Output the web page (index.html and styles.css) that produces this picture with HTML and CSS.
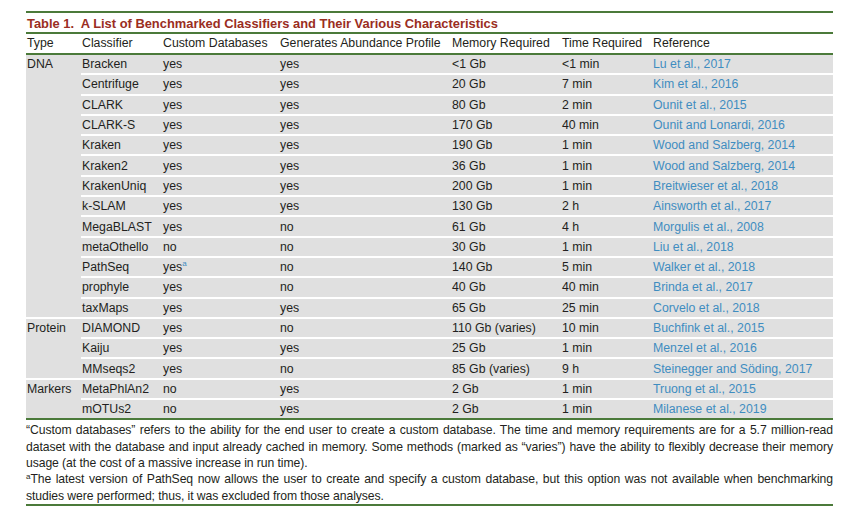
FILE: index.html
```html
<!DOCTYPE html>
<html>
<head>
<meta charset="utf-8">
<link rel="stylesheet" href="styles.css">
</head>
<body>
<div class="wrap">
  <div class="title">Table 1.&nbsp; A List of Benchmarked Classifiers and Their Various Characteristics</div>
  <table class="tbl">
    <colgroup>
      <col class="c1"><col class="c2"><col class="c3"><col class="c4"><col class="c5"><col class="c6"><col class="c7">
    </colgroup>
    <thead>
      <tr><th>Type</th><th>Classifier</th><th>Custom Databases</th><th>Generates Abundance Profile</th><th>Memory Required</th><th>Time Required</th><th>Reference</th></tr>
    </thead>
    <tbody>
      <tr class="first"><td class="type" rowspan="13">DNA</td><td>Bracken</td><td>yes</td><td>yes</td><td>&lt;1 Gb</td><td>&lt;1 min</td><td class="ref">Lu et al., 2017</td></tr>
      <tr><td>Centrifuge</td><td>yes</td><td>yes</td><td>20 Gb</td><td>7 min</td><td class="ref">Kim et al., 2016</td></tr>
      <tr><td>CLARK</td><td>yes</td><td>yes</td><td>80 Gb</td><td>2 min</td><td class="ref">Ounit et al., 2015</td></tr>
      <tr><td>CLARK-S</td><td>yes</td><td>yes</td><td>170 Gb</td><td>40 min</td><td class="ref">Ounit and Lonardi, 2016</td></tr>
      <tr><td>Kraken</td><td>yes</td><td>yes</td><td>190 Gb</td><td>1 min</td><td class="ref">Wood and Salzberg, 2014</td></tr>
      <tr><td>Kraken2</td><td>yes</td><td>yes</td><td>36 Gb</td><td>1 min</td><td class="ref">Wood and Salzberg, 2014</td></tr>
      <tr><td>KrakenUniq</td><td>yes</td><td>yes</td><td>200 Gb</td><td>1 min</td><td class="ref">Breitwieser et al., 2018</td></tr>
      <tr><td>k-SLAM</td><td>yes</td><td>yes</td><td>130 Gb</td><td>2 h</td><td class="ref">Ainsworth et al., 2017</td></tr>
      <tr><td>MegaBLAST</td><td>yes</td><td>no</td><td>61 Gb</td><td>4 h</td><td class="ref">Morgulis et al., 2008</td></tr>
      <tr><td>metaOthello</td><td>no</td><td>no</td><td>30 Gb</td><td>1 min</td><td class="ref">Liu et al., 2018</td></tr>
      <tr><td>PathSeq</td><td>yes<sup class="fn">a</sup></td><td>no</td><td>140 Gb</td><td>5 min</td><td class="ref">Walker et al., 2018</td></tr>
      <tr><td>prophyle</td><td>yes</td><td>no</td><td>40 Gb</td><td>40 min</td><td class="ref">Brinda et al., 2017</td></tr>
      <tr><td>taxMaps</td><td>yes</td><td>yes</td><td>65 Gb</td><td>25 min</td><td class="ref">Corvelo et al., 2018</td></tr>
      <tr><td class="type" rowspan="3">Protein</td><td>DIAMOND</td><td>yes</td><td>no</td><td>110 Gb (varies)</td><td>10 min</td><td class="ref">Buchfink et al., 2015</td></tr>
      <tr><td>Kaiju</td><td>yes</td><td>yes</td><td>25 Gb</td><td>1 min</td><td class="ref">Menzel et al., 2016</td></tr>
      <tr><td>MMseqs2</td><td>yes</td><td>no</td><td>85 Gb (varies)</td><td>9 h</td><td class="ref">Steinegger and Söding, 2017</td></tr>
      <tr><td class="type" rowspan="2">Markers</td><td>MetaPhlAn2</td><td>no</td><td>yes</td><td>2 Gb</td><td>1 min</td><td class="ref">Truong et al., 2015</td></tr>
      <tr><td>mOTUs2</td><td>no</td><td>yes</td><td>2 Gb</td><td>1 min</td><td class="ref">Milanese et al., 2019</td></tr>
    </tbody>
  </table>
  <div class="notes">
    <p>“Custom databases” refers to the ability for the end user to create a custom database. The time and memory requirements are for a 5.7 million-read dataset with the database and input already cached in memory. Some methods (marked as “varies”) have the ability to flexibly decrease their memory usage (at the cost of a massive increase in run time).</p>
    <p><sup class="fn2">a</sup>The latest version of PathSeq now allows the user to create and specify a custom database, but this option was not available when benchmarking studies were performed; thus, it was excluded from those analyses.</p>
  </div>
</div>
</body>
</html>
```
FILE: styles.css
```css
html, body {
  margin: 0;
  padding: 0;
  background: #ffffff;
}
body {
  font-family: "Liberation Sans", Arial, sans-serif;
  font-size: 12.3px;
  color: #231f20;
}
.wrap {
  margin: 11px 0 0 26px;
  width: 807px;
  border-top: 2px solid #4b7a3a;
}
.title {
  height: 18px;
  padding-top: 1px;
  line-height: 19px;
  font-weight: bold;
  font-size: 12.9px;
  color: #9a2d22;
  padding-left: 1px;
  border-bottom: 2px solid #4b7a3a;
}
.tbl {
  width: 807px;
  border-collapse: collapse;
  border-spacing: 0;
  table-layout: fixed;
  border-bottom: 2px solid #4b7a3a;
}
.c1 { width: 55px; }
.c2 { width: 81px; }
.c3 { width: 117px; }
.c4 { width: 172px; }
.c5 { width: 110px; }
.c6 { width: 91px; }
.c7 { width: 181px; }
.tbl th {
  font-weight: normal;
  text-align: left;
  height: 19px;
  padding: 0 0 0 1px;
  line-height: 19px;
  white-space: nowrap;
  border-bottom: 2px solid #4b7a3a;
}
.tbl td {
  background: #e0e0e0;
  height: 18.3px;
  padding: 0 0 0 1px;
  line-height: 18px;
  white-space: nowrap;
  border-top: 2px solid #ffffff;
  vertical-align: middle;
}
.tbl tr.first td {
  border-top: none;
}
.tbl td.type {
  vertical-align: top;
}
.tbl td.ref {
  color: #3f8dc0;
}
.fn {
  color: #3f8dc0;
  font-size: 8px;
  line-height: 0;
  vertical-align: 5px;
}
.notes {
  padding: 2px 0 0 0;
  border-bottom: 2px solid #4b7a3a;
}
.notes p {
  margin: 0;
  font-size: 12.2px;
  letter-spacing: -0.08px;
  line-height: 16.3px;
  text-align: justify;
}
.fn2 {
  font-size: 8px;
  line-height: 0;
  vertical-align: 4px;
}
```
